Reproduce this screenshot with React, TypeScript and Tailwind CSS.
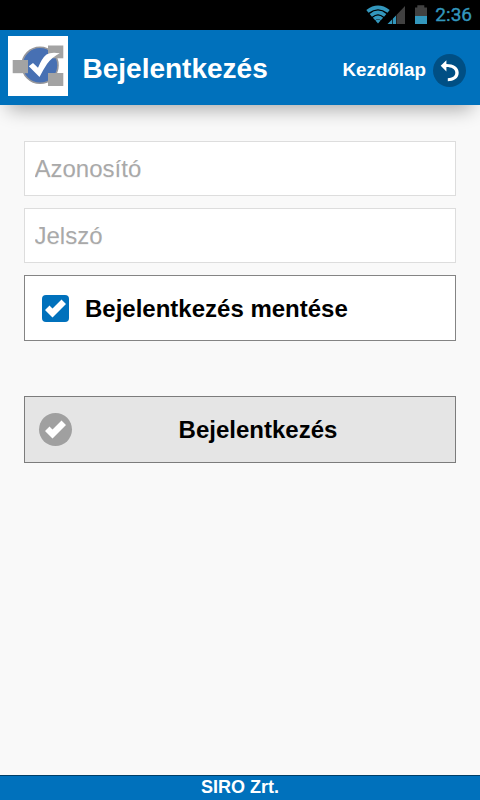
import React, { useState } from 'react';

const CheckMark: React.FC<{ className?: string }> = ({ className }) => (
  <svg viewBox="0 0 14 14" className={className} fill="#fff">
    <polygon points="14,4 11,1 5,7 3,5 0,8 5,13" />
  </svg>
);

const Logo: React.FC = () => (
  <svg viewBox="0 0 60 60" className="w-[60px] h-[60px] mb-[3px] bg-white">
    <circle cx="32" cy="29.3" r="18" fill="#4770b3" stroke="#97979b" strokeWidth="1.6" />
    <g fill="#a3a3a3">
      <rect x="4.7" y="24" width="15.3" height="13.2" />
      <rect x="40" y="9.5" width="15.3" height="12.8" />
      <rect x="40" y="37" width="15.3" height="13" />
    </g>
    <path d="M20.8 30.2 L25 27 L30 31.8 Q34 22 38.5 18.5 Q43 15.6 51.8 17.2 Q44 21 39 28 Q35 34 31.5 41 Z" fill="#fff" />
  </svg>
);

const StatusBar: React.FC = () => (
  <div className="h-[30px] shrink-0 bg-black flex items-center justify-end pr-2 text-[#3397bd]">
    <svg viewBox="0 0 62 30" className="w-[62px] h-[30px] mr-[7px]">
      <g fill="none" stroke="#3397bd" strokeWidth="3.6">
        <path d="M1.4 11.4 Q12 3.4 22.6 11.4" />
        <path d="M4.8 15.4 Q12 9.4 19.2 15.4" />
        <path d="M8 19 Q12 15.6 16 19" />
      </g>
      <path d="M9.4 20.6 Q12 18.6 14.6 20.6 L12 23.6 Z" fill="#3397bd" />
      <path d="M39 6 V24 H30.5 V15 Z" fill="#414141" />
      <path d="M30 15.5 V24 H21.5 Z" fill="#3397bd" />
      <path d="M26.5 17 V24" stroke="#000" strokeWidth="0.7" />
      <path d="M51.3 5.3 H58.3 V7.5 H61 V24 H49 V7.5 H51.3 Z" fill="#414141" />
      <rect x="49" y="16" width="12" height="8" fill="#3397bd" />
    </svg>
    <span className="font-['Roboto',sans-serif] text-[19px] leading-[30px] [-webkit-text-stroke:0.4px_#3397bd]">2:36</span>
  </div>
);

const App: React.FC = () => {
  const [userName, setUserName] = useState('');
  const [password, setPassword] = useState('');
  const [remember, setRemember] = useState(true);

  const inputClass =
    "block w-full h-[55px] px-[9.5px] bg-white border border-[#ddd] text-2xl text-[#333] placeholder:text-[#a9a9a9] outline-none [text-shadow:0_1px_0_#f3f3f3]";

  return (
    <div className="h-screen flex flex-col bg-[#f9f9f9] text-black font-['Liberation_Sans',Arial,sans-serif]">
      <StatusBar />

      {/* Header */}
      <header className="h-[75px] shrink-0 bg-[#0071bc] text-white flex items-center pl-2 pr-[14px] shadow-[0_12px_18px_-8px_rgba(0,0,0,0.33)]">
        <Logo />
        <h1 className="ml-[14.5px] mt-[2px] flex-1 text-[28px] leading-8 font-bold">Bejelentkezés</h1>
        <button className="flex items-center gap-[7px] mt-[6px] text-[18.8px] leading-6 font-bold">
          <span className="-mt-[2px]">Kezdőlap</span>
          <svg viewBox="0 0 33 33" className="w-[33px] h-[33px]">
            <circle cx="16.5" cy="16.5" r="16.5" fill="#004f84" />
            <path
              d="M7.7 11.8 L13.4 6.2 V9.9 C20.5 10 25.7 13 25.7 18.7 C25.7 24.3 20.5 27.2 14.8 27.2 V24.2 C19.3 24 22.3 22 22.3 18.7 C22.3 15.2 18.5 13.1 13.4 13.1 V17.4 Z"
              fill="#fff"
            />
          </svg>
        </button>
      </header>

      {/* Login form */}
      <main className="flex-1 px-6 pt-9">
        <div className="flex flex-col gap-3">
          <input
            type="text"
            placeholder="Azonosító"
            value={userName}
            onChange={(e) => setUserName(e.target.value)}
            className={inputClass}
          />
          <input
            type="password"
            placeholder="Jelszó"
            value={password}
            onChange={(e) => setPassword(e.target.value)}
            className={inputClass}
          />
          <button
            type="button"
            onClick={() => setRemember(!remember)}
            className="h-[66px] pl-[17px] flex items-center bg-white border border-[#848484] text-2xl font-bold"
          >
            <span className="w-[27px] h-[27px] rounded-[4px] bg-[#0071bc] flex items-center justify-center">
              {remember && <CheckMark className="w-[21px] h-[21px]" />}
            </span>
            <span className="ml-4 mt-[2px]">Bejelentkezés mentése</span>
          </button>
        </div>

        <button
          type="button"
          className="mt-[55px] w-full h-[67px] px-[14px] flex items-center bg-[#e5e5e5] border border-[#7c7c7c] text-2xl font-bold"
        >
          <span className="w-[33px] h-[33px] rounded-full bg-[#a0a0a0] flex items-center justify-center">
            <CheckMark className="w-[21px] h-[21px]" />
          </span>
          <span className="flex-1 pl-[3px] text-center">Bejelentkezés</span>
        </button>
      </main>

      <footer className="h-[25px] shrink-0 bg-[#0071bc] border-t border-[#003e66] text-white text-lg leading-[23px] font-bold text-center">
        SIRO Zrt.
      </footer>
    </div>
  );
};

export default App;
